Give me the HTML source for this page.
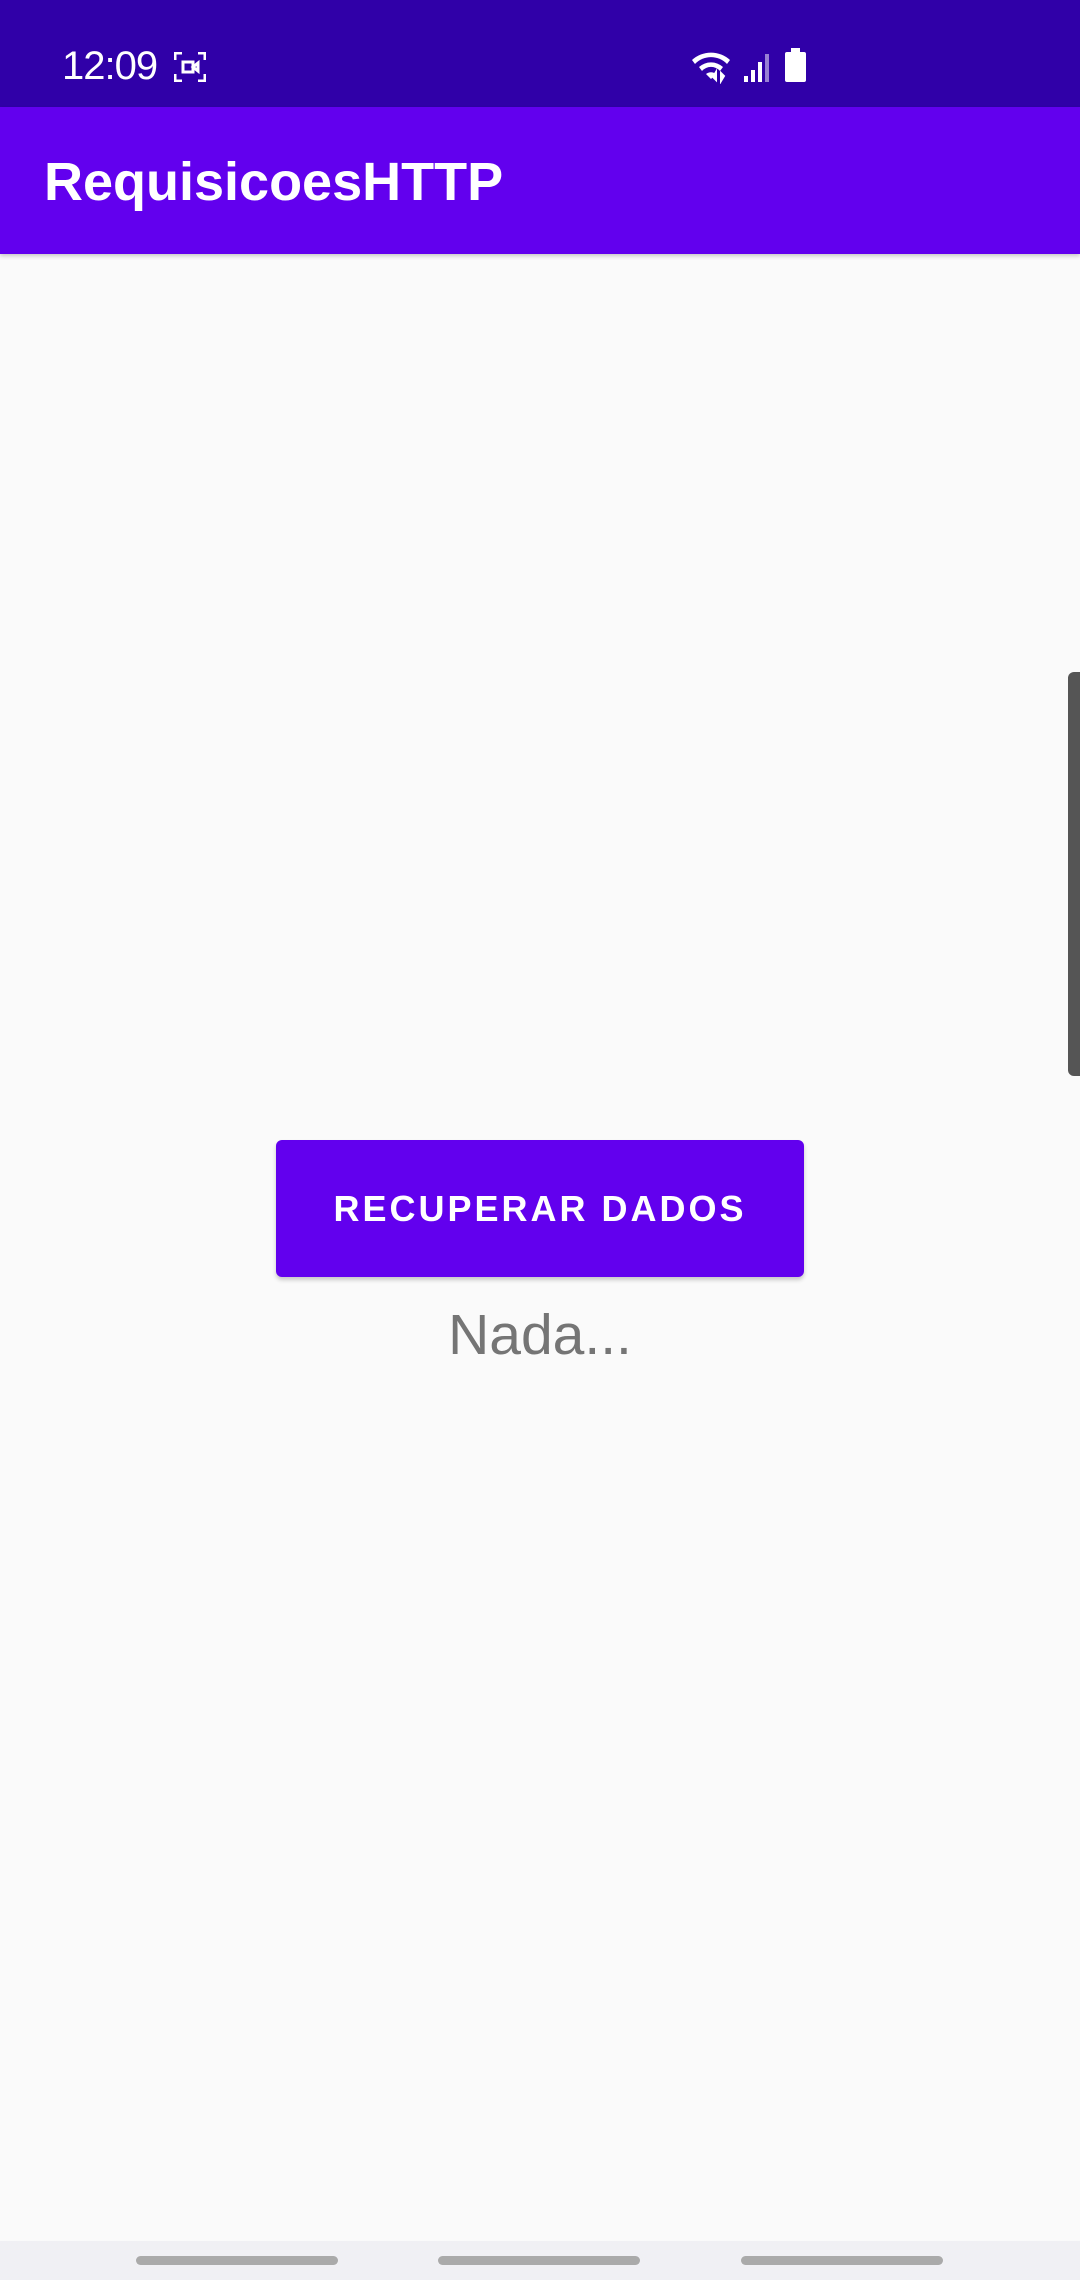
<!DOCTYPE html>
<html><head><meta charset="utf-8"><style>
*{margin:0;padding:0;box-sizing:border-box}
body{width:1080px;height:2280px;background:#fafafa;position:relative;overflow:hidden;font-family:"Liberation Sans",sans-serif}
.sb{position:absolute;left:0;top:0;width:1080px;height:107px;background:#3000a8}
.ab{position:absolute;left:0;top:107px;width:1080px;height:147px;background:#6200ee;box-shadow:0 2px 4px rgba(0,0,0,.2)}
.time{position:absolute;left:62px;top:44px;color:#fff;font-size:40px;letter-spacing:-1px}
.title{position:absolute;left:44px;top:150px;color:#fff;font-size:54px;line-height:64px;font-weight:bold}
.btn{position:absolute;left:276px;top:1140px;width:528px;height:137px;background:#6200ee;border-radius:6px;box-shadow:0 3px 4px rgba(0,0,0,.2);color:#fff;font-size:36px;font-weight:bold;letter-spacing:3px;text-align:center;line-height:137px}
.nada{position:absolute;left:0;width:1080px;top:1302px;text-align:center;color:#757575;font-size:57px}
.nav{position:absolute;left:0;top:2241px;width:1080px;height:39px;background:#f0f0f4}
.bar{position:absolute;top:15px;height:9px;border-radius:5px;background:#aaa}
.scroll{position:absolute;left:1068px;top:672px;width:12px;height:404px;background:#555;border-radius:6px 0 0 6px}
</style></head><body>
<div class="sb"></div>
<div class="time">12:09</div>
<svg style="position:absolute;left:174px;top:52px" width="32" height="30" viewBox="0 0 32 30" fill="none" stroke="#fff" stroke-width="3"><path d="M1 8V1h7M24 1h7v7M31 22v7h-7M8 29H1v-7"/><rect x="9" y="10" width="10" height="10"/><path d="M19 15l5-4v8z"/></svg>
<svg style="position:absolute;left:692px;top:48px" width="120" height="36" viewBox="0 0 120 36" fill="#fff"><path d="M0 12a28 28 0 0 1 38 0l-3 4a22 22 0 0 0-32 0z M7 19a18 18 0 0 1 24 0l-3 4a12 12 0 0 0-18 0z M14 26a8 8 0 0 1 10 0l-5 5z"/><path d="M24 24v8l-3-3zM29 33v-8l3 3z" stroke="#fff" stroke-width="2"/><rect x="52" y="28" width="4" height="6"/><rect x="59" y="22" width="4" height="12"/><rect x="66" y="14" width="4" height="20"/><rect x="73" y="6" width="4" height="28" opacity=".5"/><rect x="93" y="4" width="21" height="30" rx="2"/><rect x="99" y="0" width="9" height="5"/></svg>
<div class="ab"></div>
<div class="title">RequisicoesHTTP</div>
<div class="scroll"></div>
<div class="btn">RECUPERAR DADOS</div>
<div class="nada">Nada...</div>
<div class="nav"><div class="bar" style="left:136px;width:202px"></div><div class="bar" style="left:438px;width:202px"></div><div class="bar" style="left:741px;width:202px"></div></div>
</body></html>
